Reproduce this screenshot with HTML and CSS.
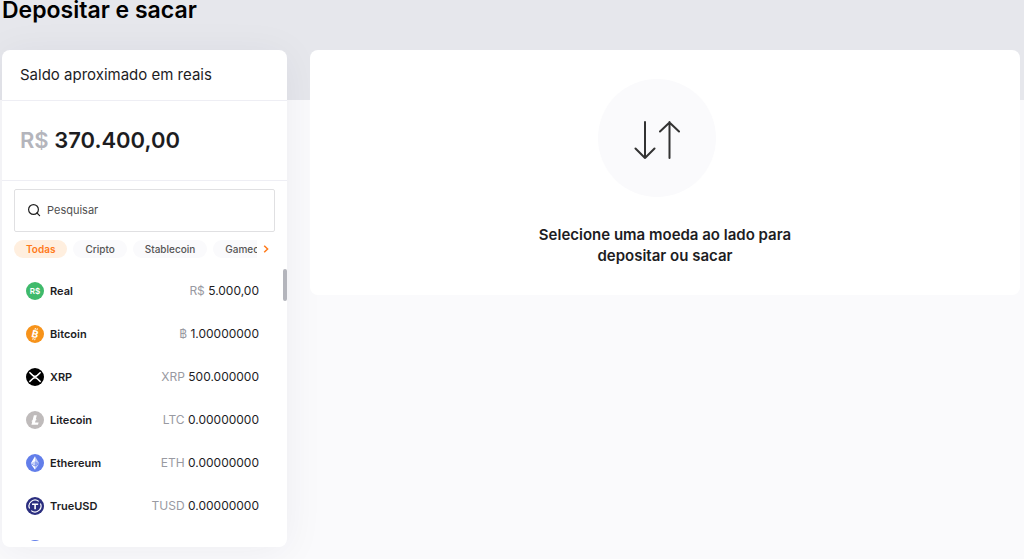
FILE: index.html
```html
<!DOCTYPE html>
<html lang="pt-BR">
  <head>
    <meta charset="UTF-8" />
    <meta name="viewport" content="width=device-width, initial-scale=1.0" />
    <title>Depositar e sacar</title>
    <link rel="stylesheet" href="styles.css">
  </head>
  <body>
    <h1 class="title">Depositar e sacar</h1>

    <div class="container">
      <!-- wallet -->
      <section class="card wallet">
        <h2 class="wallet-title">Saldo aproximado em reais</h2>
        <p class="balance"><span class="currency">R$</span> 370.400,00</p>

        <div class="search">
          <svg class="search-icon" viewBox="0 0 14 14" aria-hidden="true">
            <circle cx="6.5" cy="6.5" r="4.9" />
            <path d="M10 10l2.6 2.6" />
          </svg>
          <input type="text" class="search-input" placeholder="Pesquisar" aria-label="Pesquisar" />
        </div>

        <div class="filters">
          <div class="chips">
            <button class="chip active" type="button">Todas</button>
            <button class="chip" type="button">Cripto</button>
            <button class="chip" type="button">Stablecoin</button>
            <button class="chip" type="button">Gamecoin</button>
          </div>
          <button class="next" type="button" aria-label="Próximo">
            <svg viewBox="0 0 6 8" width="6" height="8"><path d="M1.2 0.8L4.6 4L1.2 7.2" /></svg>
          </button>
        </div>

        <div class="coins">
          <ul class="coin-list">
            <li class="coin">
              <svg class="coin-icon" viewBox="0 0 18 18">
                <circle cx="9" cy="9" r="9" fill="#3fba6b" />
                <text x="9" y="12" font-size="8" font-weight="600" text-anchor="middle" fill="#fff">R$</text>
              </svg>
              <span class="coin-name">Real</span>
              <span class="amount"><span class="unit">R$</span> 5.000,00</span>
            </li>
            <li class="coin">
              <svg class="coin-icon" viewBox="0 0 18 18">
                <circle cx="9" cy="9" r="9" fill="#f7931a" />
                <path d="M9 4.8l.4-1.8M10.9 5.2l.4-1.8M6.8 14.8l.4-1.8M8.7 15.2l.4-1.8" stroke="#fff" />
                <text x="9" y="12.6" font-size="10" font-weight="700" text-anchor="middle" fill="#fff" transform="rotate(14 9 9)">B</text>
              </svg>
              <span class="coin-name">Bitcoin</span>
              <span class="amount"><span class="unit">฿</span> 1.00000000</span>
            </li>
            <li class="coin">
              <svg class="coin-icon" viewBox="0 0 18 18">
                <circle cx="9" cy="9" r="9" fill="#000" />
                <path d="M3.4 4.2L6.7 7.4Q9 9.5 11.3 7.4L14.6 4.2M3.4 13.9L6.7 10.7Q9 8.6 11.3 10.7L14.6 13.9" fill="none" stroke="#fff" stroke-width="1.5" />
              </svg>
              <span class="coin-name">XRP</span>
              <span class="amount"><span class="unit">XRP</span> 500.000000</span>
            </li>
            <li class="coin">
              <svg class="coin-icon" viewBox="0 0 18 18">
                <circle cx="9" cy="9" r="9" fill="#bfbbbb" />
                <path d="M7.9 4.2H10.8L9.8 8.2L10.5 8L10.2 9.2L9.5 9.5L9 11.4H12.6L12 13.8H5.4L6.3 10.5L5.6 10.7L5.9 9.5L6.6 9.2Z" fill="#fff" />
              </svg>
              <span class="coin-name">Litecoin</span>
              <span class="amount"><span class="unit">LTC</span> 0.00000000</span>
            </li>
            <li class="coin">
              <svg class="coin-icon" viewBox="0 0 18 18">
                <circle cx="9" cy="9" r="9" fill="#627eea" />
                <path d="M9 2.3L4.9 9.2L9 11.6Z" fill="#fff" />
                <path d="M9 2.3L13.1 9.2L9 11.6Z" fill="#c5d0f8" />
                <path d="M4.9 9.2L9 7.3V11.6Z" fill="#c5d0f8" />
                <path d="M13.1 9.2L9 7.3V11.6Z" fill="#8fa4f0" />
                <path d="M4.9 10.1L9 12.5V15.8Z" fill="#fff" />
                <path d="M13.1 10.1L9 12.5V15.8Z" fill="#c5d0f8" />
              </svg>
              <span class="coin-name">Ethereum</span>
              <span class="amount"><span class="unit">ETH</span> 0.00000000</span>
            </li>
            <li class="coin">
              <svg class="coin-icon" viewBox="0 0 18 18">
                <circle cx="9" cy="9" r="9" fill="#2b2e7f" />
                <path d="M3.6 11.6A6 6 0 0 1 12.8 4.4M14.4 6.4A6 6 0 0 1 5.2 13.6" fill="none" stroke="#fff" stroke-width="1.2" />
                <path d="M6 6.5H12.2V8H9.9V12.2H8.3V8H6Z" fill="#fff" />
              </svg>
              <span class="coin-name">TrueUSD</span>
              <span class="amount"><span class="unit">TUSD</span> 0.00000000</span>
            </li>
            <li class="coin">
              <svg class="coin-icon" viewBox="0 0 18 18">
                <circle cx="9" cy="9" r="9" fill="#627eea" />
              </svg>
            </li>
          </ul>
          <div class="scroll-thumb"></div>
        </div>
      </section>

      <!-- empty state -->
      <main class="card empty">
        <div class="empty-icon">
          <svg viewBox="0 0 46 38" width="46" height="38">
            <path d="M11 1V37M1.5 27.5L11 37L20.5 27.5M35.5 37V1M26 10.5L35.5 1.5L45 10.5" />
          </svg>
        </div>
        <p class="empty-text">Selecione uma moeda ao lado para depositar ou sacar</p>
      </main>
    </div>
  </body>
</html>
```
FILE: styles.css
```css
* {
  box-sizing: border-box;
}

body {
  margin: 0;
  font-family: Inter, "Liberation Sans", sans-serif;
  color: #1d1d1f;
  background: #fafafc linear-gradient(#e6e7ec, #e6e7ec) no-repeat 0 0 / 100% 100px;
}

button {
  border: none;
  font-family: inherit;
  cursor: pointer;
}

.title {
  margin: 0 0 30px;
  padding-left: 2px;
  font-size: 23px;
  line-height: 20px;
  font-weight: 600;
  color: #000;
}

.container {
  display: grid;
  grid-template-columns: 285px 1fr;
  gap: 23px;
  align-items: start;
  padding: 0 4px 12px 2px;
}

.card {
  background: #fff;
  border-radius: 8px;
}

/* wallet */
.wallet {
  box-shadow: 0 4px 40px rgba(30, 30, 60, 0.06);
  overflow: hidden;
}

.wallet-title {
  margin: 0;
  padding: 15px 18px;
  font-size: 15px;
  line-height: 20px;
  font-weight: 400;
  border-bottom: 1px solid #eeeef4;
}

.balance {
  margin: 0;
  padding: 24px 18px 25px;
  font-size: 22px;
  line-height: 30px;
  font-weight: 600;
  border-bottom: 1px solid #eeeef4;
}

.currency {
  color: #b4b5bc;
}

.search {
  display: flex;
  align-items: center;
  gap: 6px;
  height: 43px;
  margin: 8px 12px;
  padding: 0 12px 2px;
  border: 1px solid #e0e0e2;
  border-radius: 2px;
}

.search-icon {
  width: 14px;
  height: 14px;
  fill: none;
  stroke: #222;
  stroke-width: 1.2;
  stroke-linecap: round;
}

.search-input {
  flex: 1;
  min-width: 0;
  padding: 0;
  border: none;
  outline: none;
  font-family: inherit;
  font-size: 11px;
}

.search-input::placeholder {
  color: #505050;
}

.filters {
  display: flex;
  align-items: center;
  gap: 6px;
  margin: 0 18px 11px 12px;
}

.chips {
  flex: 1;
  display: flex;
  gap: 6px;
  overflow: hidden;
}

.chip {
  flex: none;
  height: 18px;
  padding: 0 12px;
  border-radius: 9px;
  background: #fafafc;
  color: #555;
  font-size: 10px;
  line-height: 18px;
  font-weight: 500;
}

.chip.active {
  background: #ffefdf;
  color: #ff7a1a;
  font-weight: 600;
}

.next {
  display: flex;
  padding: 0;
  background: none;
}

.next path {
  fill: none;
  stroke: #ff7a1a;
  stroke-width: 1.5;
}

.coins {
  position: relative;
  height: 272px;
  margin-bottom: 6px;
  overflow: hidden;
}

.coin-list {
  list-style: none;
  margin: 0;
  padding: 0 28px 0 24px;
}

.coin {
  display: flex;
  align-items: center;
  height: 43px;
  font-size: 11px;
}

.coin-icon {
  width: 18px;
  height: 18px;
  margin-right: 6px;
}

.coin-name {
  flex: 1;
  font-weight: 600;
}

.amount {
  font-size: 12px;
}

.unit {
  color: #999aa2;
}

.scroll-thumb {
  position: absolute;
  top: 0;
  right: 0;
  width: 4px;
  height: 32px;
  border-radius: 2px;
  background: #b4b5bc;
}

/* empty state */
.empty {
  display: flex;
  flex-direction: column;
  align-items: center;
  padding: 29px 24px;
}

.empty-icon {
  display: flex;
  align-items: center;
  justify-content: center;
  width: 118px;
  height: 118px;
  margin-right: 16px;
  padding-top: 3px;
  border-radius: 50%;
  background: #fafafc;
}

.empty-icon path {
  fill: none;
  stroke: #333;
  stroke-width: 2;
  stroke-linecap: round;
  stroke-linejoin: round;
}

.empty-text {
  max-width: 270px;
  margin: 27px 0 0;
  font-size: 15px;
  line-height: 21px;
  font-weight: 600;
  text-align: center;
}
```
